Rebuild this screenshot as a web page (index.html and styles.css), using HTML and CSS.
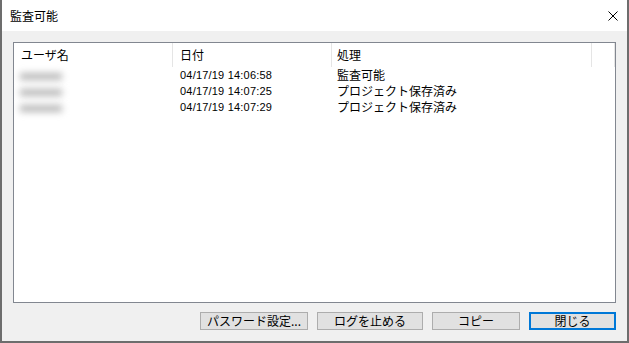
FILE: index.html
```html
<!DOCTYPE html>
<html lang="ja">
<head>
    <meta charset="UTF-8">
    <meta name="viewport" content="width=device-width, initial-scale=1.0">
    <title>監査可能</title>
    <link rel="stylesheet" href="styles.css">
</head>
<body>
    <div class="window">
        <div class="titlebar">
            <span class="title">監査可能</span>
            <svg class="close" width="10" height="10" viewBox="0 0 10 10">
                <path d="M0.5 0.5 L9.5 9.5 M9.5 0.5 L0.5 9.5" stroke="#000" stroke-width="1" fill="none"/>
            </svg>
        </div>
        <div class="content">
            <div class="listbox">
                <div class="list-header">
                    <div class="col col-user">ユーザ名</div>
                    <div class="col col-date">日付</div>
                    <div class="col col-action">処理</div>
                    <div class="col col-rest"></div>
                </div>
                <div class="row">
                    <div class="col col-user"><span class="blur"></span></div>
                    <div class="col col-date">04/17/19 14:06:58</div>
                    <div class="col col-action">監査可能</div>
                </div>
                <div class="row">
                    <div class="col col-user"><span class="blur"></span></div>
                    <div class="col col-date">04/17/19 14:07:25</div>
                    <div class="col col-action">プロジェクト保存済み</div>
                </div>
                <div class="row">
                    <div class="col col-user"><span class="blur"></span></div>
                    <div class="col col-date">04/17/19 14:07:29</div>
                    <div class="col col-action">プロジェクト保存済み</div>
                </div>
            </div>
            <div class="buttons">
                <button class="btn btn-password">パスワード設定...</button>
                <button class="btn btn-stop">ログを止める</button>
                <button class="btn btn-copy">コピー</button>
                <button class="btn btn-close">閉じる</button>
            </div>
        </div>
    </div>
</body>
</html>
```

FILE: styles.css
```css
body {
    margin: 0;
    font-family: "Noto Sans CJK JP", "DejaVu Sans", sans-serif;
    font-size: 12px;
    color: #000000;
    background: #ffffff;
}

.window {
    width: 629px;
    height: 343px;
    box-sizing: border-box;
    border: 2px solid #6d6d6d;
    border-top: none;
    background: #f0f0f0;
    display: flex;
    flex-direction: column;
}

.titlebar {
    height: 31px;
    background: #ffffff;
    display: flex;
    align-items: center;
    justify-content: space-between;
    padding: 0 9px 0 8px;
    flex-shrink: 0;
}

.title {
    font-size: 12px;
    line-height: 14px;
}

.close {
    display: block;
}

.content {
    flex: 1;
    display: flex;
    flex-direction: column;
    padding: 11px;
}

.listbox {
    height: 261px;
    box-sizing: border-box;
    border: 1px solid #828790;
    background: #ffffff;
}

.list-header {
    display: flex;
    height: 24px;
    align-items: center;
}

.list-header .col {
    height: 24px;
    line-height: 24px;
    border-right: 1px solid #e5e5e5;
}

.list-header .col-rest {
    width: 23px;
}

.col {
    padding-left: 7px;
    box-sizing: border-box;
    white-space: nowrap;
}

.col-user {
    width: 159px;
}

.col-date {
    width: 159px;
}

.col-action {
    width: 260px;
    padding-left: 5px;
}

.row {
    display: flex;
    height: 16px;
    line-height: 16px;
}

.row .col-date {
    font-family: "Liberation Sans", sans-serif;
    font-size: 11px;
    letter-spacing: 0.2px;
}

.blur {
    display: inline-block;
    width: 42px;
    height: 7px;
    margin-left: -1px;
    vertical-align: middle;
    background: #b8b8b8;
    filter: blur(3.5px);
}

.buttons {
    display: flex;
    justify-content: flex-end;
    gap: 9px;
    margin-top: 9px;
}

.btn {
    height: 18px;
    box-sizing: border-box;
    border: 1px solid #adadad;
    background: #e1e1e1;
    font-family: "Noto Sans CJK JP", sans-serif;
    font-size: 12px;
    line-height: 14px;
    padding: 0;
    color: #000000;
}

.btn-password {
    width: 108px;
}

.btn-stop {
    width: 106px;
}

.btn-copy {
    width: 88px;
}

.btn-close {
    width: 87px;
    border: 2px solid #0078d7;
}
```
